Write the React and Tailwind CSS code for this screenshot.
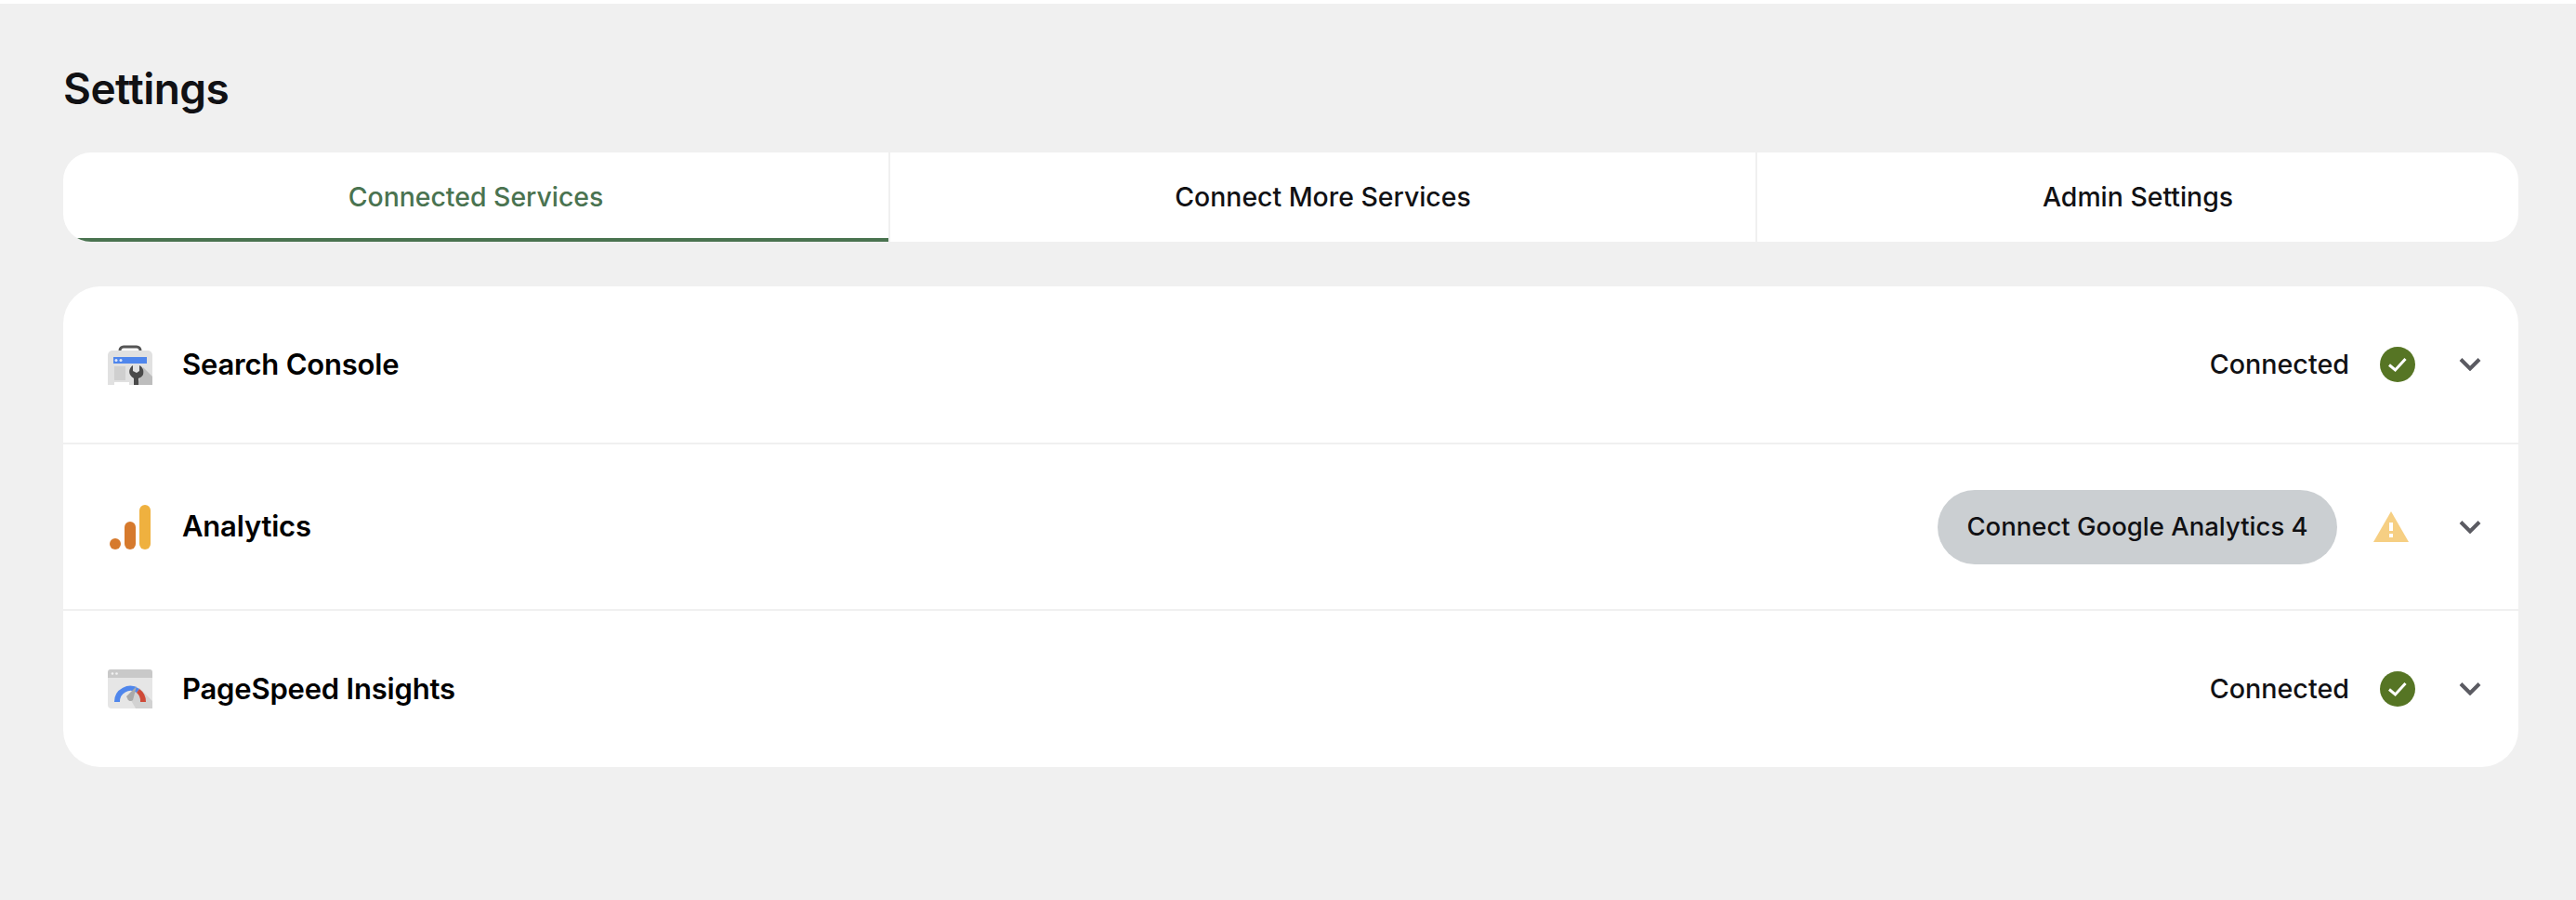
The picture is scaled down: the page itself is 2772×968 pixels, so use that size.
const FONT = 'font-["Inter","Noto_Sans",sans-serif]'

function SearchConsoleIcon() {
  return (
    <svg width="48" height="44" viewBox="0 0 48 44" className="shrink-0">
      <path d="M13 11V7a4 4 0 0 1 4-4h14a4 4 0 0 1 4 4v4" fill="none" stroke="#555" strokeWidth="3" />
      <path d="M5 7h38a5 5 0 0 1 5 5v32H0V12a5 5 0 0 1 5-5z" fill="#e1e1e1" />
      <rect x="6" y="14" width="36" height="7" fill="#4f86ec" />
      <circle cx="9" cy="17.500" r="1.500" fill="#dfe8fb" />
      <circle cx="14" cy="17.500" r="1.500" fill="#dfe8fb" />
      <rect x="7" y="24" width="12" height="15" fill="#cfcfcf" />
      <rect x="7" y="41" width="16" height="3" fill="#fff" />
      <path d="M38 25l10 10v9H32z" fill="#bdbdbd" />
      <path d="M27 23c-3 2-5 6-3 10 1 2 3 3 4 4v7h5v-7c2-1 4-2 5-4 1-4 0-8-4-10v6l-3 2-4-2z" fill="#4a4a4a" />
    </svg>
  )
}

function AnalyticsIcon() {
  return (
    <svg width="44" height="48" viewBox="0 0 44 48" className="shrink-0">
      <circle cx="6" cy="42" r="6" fill="#d67a2d" />
      <rect x="16" y="18" width="12" height="30" rx="6" fill="#d67a2d" />
      <rect x="32" y="0" width="12" height="48" rx="6" fill="#efb13f" />
    </svg>
  )
}

function PageSpeedIcon() {
  return (
    <svg width="48" height="42" viewBox="0 0 48 42" className="shrink-0">
      <path d="M3 0h42a3 3 0 0 1 3 3v6H0V3a3 3 0 0 1 3-3z" fill="#c9c9c9" />
      <path d="M0 9h48v29a4 4 0 0 1-4 4H4a4 4 0 0 1-4-4z" fill="#e6e6e6" />
      <circle cx="5" cy="4.500" r="1.300" fill="#f1f1f1" />
      <circle cx="9.500" cy="4.500" r="1.300" fill="#f1f1f1" />
      <path d="M22 28l12-8 14 14v8H30z" fill="#d2d2d2" />
      <path d="M7 35a17 17 0 0 1 27-14l-3 4a11.500 11.500 0 0 0-18 10z" fill="#4f86ec" />
      <path d="M34 21a17 17 0 0 1 7 14h-6a11.500 11.500 0 0 0-4-10z" fill="#cf4a38" />
      <path d="M31 18l-4 15a3.500 3.500 0 0 1-6-2l-1-2z" fill="#a9a9a9" />
    </svg>
  )
}

function CheckBadge() {
  return (
    <svg width="38" height="38" viewBox="0 0 38 38" className="shrink-0">
      <circle cx="19" cy="19" r="19" fill="#567524" />
      <path d="M10 19.500l6.500 5.500 11-12" fill="none" stroke="#fff" strokeWidth="3" />
    </svg>
  )
}

function WarningBadge() {
  return (
    <svg width="38" height="33" viewBox="0 0 38 33" className="shrink-0">
      <path d="M19 0l19 33H0z" fill="#f6cf83" />
      <rect x="17" y="12" width="4" height="9" fill="#fff" />
      <rect x="17" y="24" width="4" height="4" fill="#fff" />
    </svg>
  )
}

function Chevron() {
  return (
    <svg width="24" height="15" viewBox="0 0 24 15" className="shrink-0">
      <path d="M2 2.500l10 10 10-10" fill="none" stroke="#5b5b62" strokeWidth="4" />
    </svg>
  )
}

function Row({ icon, title, children, className }) {
  return (
    <div className={`flex items-center pl-[48px] pr-[40px] ${className}`}>
      <div className="w-[48px] flex justify-center">{icon}</div>
      <span className="ml-[32px] text-[31px] font-semibold text-black tracking-[-0.2px]">{title}</span>
      <div className="ml-auto flex items-center">{children}</div>
    </div>
  )
}

function Connected() {
  return (
    <>
      <span className="text-[28.700px] font-medium text-[#111114]">Connected</span>
      <span className="ml-[33px] mr-[47px]"><CheckBadge /></span>
      <Chevron />
    </>
  )
}

export default function App() {
  return (
    <div className={`${FONT} min-h-screen bg-[#f0f0f0] border-t-4 border-white pl-[68px] pr-[62px]`}>
      <h1 className="pt-[61px] pb-[3px] text-[46px] leading-[60px] font-semibold tracking-[-0.5px] text-[#111114]">Settings</h1>

      <div className="mt-[36px] flex h-[96px] bg-white rounded-[30px] overflow-hidden text-[28.400px] font-medium text-[#111114]">
        <div className="w-[888px] flex items-center justify-center pt-1 border-b-4 border-[#4a7350] text-[#4a7350]">Connected Services</div>
        <div className="w-[933px] flex items-center justify-center border-l-2 border-[#f0f0f0]">Connect More Services</div>
        <div className="flex-1 flex items-center justify-center border-l-2 border-[#f0f0f0]">Admin Settings</div>
      </div>

      <div className="mt-[48px] bg-white rounded-[40px] overflow-hidden">
        <Row icon={<SearchConsoleIcon />} title="Search Console" className="h-[170px] border-b-2 border-[#f0f0f0]">
          <Connected />
        </Row>
        <Row icon={<AnalyticsIcon />} title="Analytics" className="h-[179px] border-b-2 border-[#f0f0f0]">
          <button className="h-[80px] w-[430px] rounded-full bg-[#cbcfd2] text-[27.500px] font-medium text-[#111114]">Connect Google Analytics 4</button>
          <span className="ml-[39px] mr-[54px]"><WarningBadge /></span>
          <Chevron />
        </Row>
        <Row icon={<PageSpeedIcon />} title="PageSpeed Insights" className="h-[168px]">
          <Connected />
        </Row>
      </div>
    </div>
  )
}
